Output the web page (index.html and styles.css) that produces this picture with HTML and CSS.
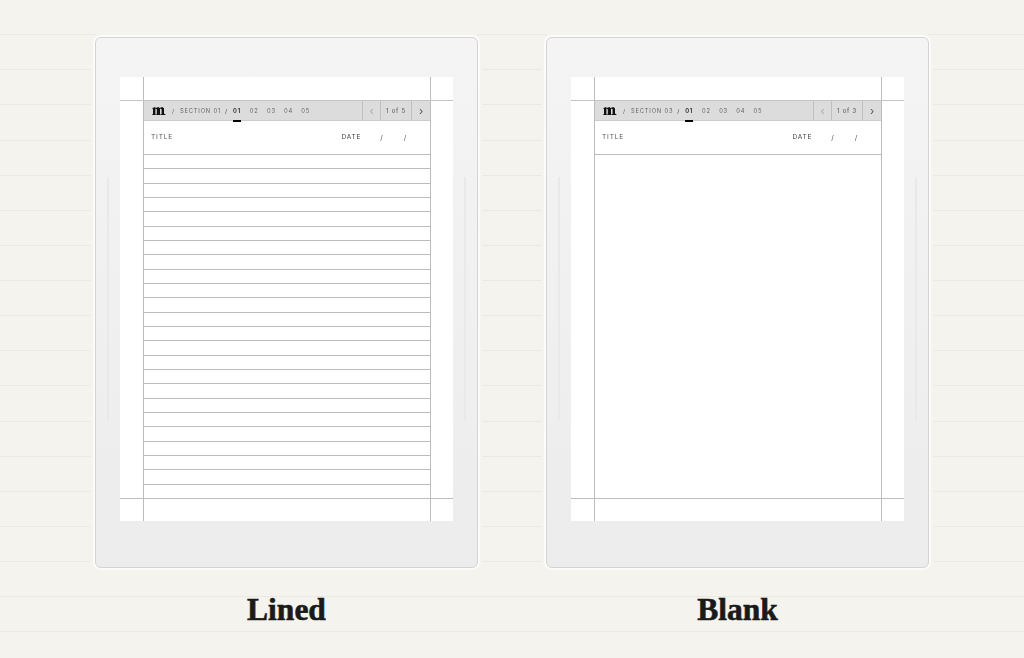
FILE: index.html
```html
<!DOCTYPE html>
<html lang="en">
<head>
    <meta charset="UTF-8">
    <meta name="viewport" content="width=device-width, initial-scale=1.0">
    <title>Templates - Lined and Blank</title>
    <link rel="stylesheet" href="styles.css">
</head>
<body>
    <main class="templates">
        <!-- Lined template -->
        <section class="template">
            <div class="tablet">
                <div class="screen">
                    <div class="margin-top"></div>
                    <div class="page">
                        <div class="toolbar">
                            <svg class="logo" viewBox="0 0 14 8" aria-hidden="true"><path d="M0 1.2 3 0 3.8 1 6.4 0 7.6 1 10.2 0 12 1.2V6.4L14 8H8.6L9.6 6.8V2.2L8 1.6V6.8L8.8 8H4L4.8 6.8V2.2L3.4 1.6V6.8L4 8H0L1 6.8V2Z"/></svg>
                            <span class="crumb">/</span>
                            <span class="crumb section">SECTION 01</span>
                            <span class="crumb slash">/</span>
                            <span class="tab active">01</span>
                            <span class="tab">02</span>
                            <span class="tab">03</span>
                            <span class="tab">04</span>
                            <span class="tab">05</span>
                            <div class="pager">
                                <span class="pager-btn prev">&lsaquo;</span>
                                <span class="pager-count">1 of 5</span>
                                <span class="pager-btn next">&rsaquo;</span>
                            </div>
                        </div>
                        <div class="title-row">
                            <span class="title-label">TITLE</span>
                            <span class="date-label">DATE</span>
                            <span class="date-slash">/</span>
                            <span class="date-slash second">/</span>
                        </div>
                        <div class="lines">
                            <div></div><div></div><div></div><div></div><div></div><div></div>
                            <div></div><div></div><div></div><div></div><div></div><div></div>
                            <div></div><div></div><div></div><div></div><div></div><div></div>
                            <div></div><div></div><div></div><div></div><div></div><div></div>
                        </div>
                    </div>
                    <div class="margin-bottom"></div>
                </div>
            </div>
            <h2 class="caption">Lined</h2>
        </section>

        <!-- Blank template -->
        <section class="template">
            <div class="tablet">
                <div class="screen">
                    <div class="margin-top"></div>
                    <div class="page">
                        <div class="toolbar">
                            <svg class="logo" viewBox="0 0 14 8" aria-hidden="true"><path d="M0 1.2 3 0 3.8 1 6.4 0 7.6 1 10.2 0 12 1.2V6.4L14 8H8.6L9.6 6.8V2.2L8 1.6V6.8L8.8 8H4L4.8 6.8V2.2L3.4 1.6V6.8L4 8H0L1 6.8V2Z"/></svg>
                            <span class="crumb">/</span>
                            <span class="crumb section">SECTION 03</span>
                            <span class="crumb slash">/</span>
                            <span class="tab active">01</span>
                            <span class="tab">02</span>
                            <span class="tab">03</span>
                            <span class="tab">04</span>
                            <span class="tab">05</span>
                            <div class="pager">
                                <span class="pager-btn prev">&lsaquo;</span>
                                <span class="pager-count">1 of 3</span>
                                <span class="pager-btn next">&rsaquo;</span>
                            </div>
                        </div>
                        <div class="title-row">
                            <span class="title-label">TITLE</span>
                            <span class="date-label">DATE</span>
                            <span class="date-slash">/</span>
                            <span class="date-slash second">/</span>
                        </div>
                        <div class="lines"></div>
                    </div>
                    <div class="margin-bottom"></div>
                </div>
            </div>
            <h2 class="caption">Blank</h2>
        </section>
    </main>
</body>
</html>
```
FILE: styles.css
```css
/* Notebook paper background */
html, body {
    height: 100%;
    margin: 0;
}
body {
    font-family: Inter, "Liberation Sans", sans-serif;
    color: #333333;
    background-color: #f5f3ee;
    background-image: repeating-linear-gradient(to bottom, transparent 0, transparent 34.13px, #ebe9e0 34.13px, #ebe9e0 35.13px);
    overflow: hidden;
}
.templates {
    display: flex;
    gap: 68px;
    padding: 37px 0 0 95px;
}
.template {
    width: 383px;
}

/* Tablet frame */
.tablet {
    box-sizing: border-box;
    height: 531px;
    padding: 39px 24px 46px;
    border: 1px solid #d4d4d4;
    border-radius: 6px;
    background: linear-gradient(to bottom, #f4f4f4, #ececec);
    box-shadow: 0 0 0 2px #fbfbfa, 0 0 0 4px #f5f3ee;
    position: relative;
    filter: blur(0.6px);
}
.tablet::before,
.tablet::after {
    content: "";
    position: absolute;
    top: 139px;
    width: 2px;
    height: 244px;
    background-color: #e9e9e9;
}
.tablet::before {
    left: 11px;
}
.tablet::after {
    right: 11px;
}

/* Screen with the margin guides */
.screen {
    display: flex;
    flex-direction: column;
    height: 444px;
    background-color: #ffffff;
    background-image: linear-gradient(#bcbcbc, #bcbcbc), linear-gradient(#bcbcbc, #bcbcbc);
    background-size: 1px 100%;
    background-repeat: no-repeat;
    background-position: 23px 0, 310px 0;
}
.margin-top {
    flex: none;
    height: 23px;
    border-bottom: 1px solid #c4c4c4;
}
.margin-bottom {
    flex: none;
    height: 22px;
    border-top: 1px solid #bcbcbc;
}
.page {
    flex: 1;
    display: flex;
    flex-direction: column;
    min-height: 0;
    margin: 0 23px 0 24px;
}

/* Top toolbar */
.toolbar {
    flex: none;
    display: flex;
    align-items: stretch;
    height: 19px;
    padding-left: 8px;
    background-color: #dcdcdc;
    border-bottom: 1px solid #cccccc;
    font-size: 5.8px;
    letter-spacing: 0.8px;
    color: #666666;
}
.logo {
    flex: none;
    align-self: center;
    width: 14px;
    height: 8px;
    margin-right: 6px;
    fill: #111111;
}
.crumb {
    display: flex;
    align-items: center;
}
.section {
    margin-left: 5px;
}
.slash {
    margin-left: 4px;
    color: #444444;
}
.tab {
    position: relative;
    display: flex;
    align-items: center;
    justify-content: center;
    width: 8px;
    margin-left: 9.2px;
}
.slash + .tab {
    margin-left: 5px;
}
.tab.active {
    font-weight: 600;
    color: #222222;
}
.tab.active::after {
    content: "";
    position: absolute;
    left: 0;
    right: 0;
    bottom: -2px;
    height: 2px;
    background-color: #000000;
}
.pager {
    display: flex;
    margin-left: auto;
}
.pager-btn {
    display: flex;
    align-items: center;
    justify-content: center;
    box-sizing: border-box;
    width: 19px;
    border-left: 1px solid #c0c0c0;
    font-size: 11px;
    letter-spacing: 0;
    color: #555555;
}
.pager-btn.prev {
    width: 18px;
    color: #a8a8a8;
}
.pager-count {
    display: flex;
    align-items: center;
    justify-content: center;
    box-sizing: border-box;
    width: 31px;
    border-left: 1px solid #c0c0c0;
    font-weight: 500;
    letter-spacing: 0.9px;
}

/* Title and date row */
.title-row {
    flex: none;
    display: flex;
    align-items: center;
    height: 34px;
    padding: 0 0 1px 7px;
    box-sizing: border-box;
    border-bottom: 1px solid #bcbcbc;
    font-size: 6.6px;
    letter-spacing: 0.8px;
    color: #555555;
}
.date-label {
    margin-left: auto;
    margin-right: 19px;
    color: #444444;
}
.date-slash {
    margin-right: 20px;
    font-size: 7px;
}
.date-slash.second {
    margin-right: 23px;
}

/* Ruled lines */
.lines {
    flex: 1;
    display: flex;
    flex-direction: column;
    min-height: 0;
}
.lines div {
    flex: 1;
    border-bottom: 1px solid #bcbcbc;
}
.lines div:last-child {
    border-bottom: none;
}

/* Captions under the tablets */
.caption {
    margin: 25px 0 0;
    text-align: center;
    font-family: "Liberation Serif", serif;
    font-size: 31.5px;
    line-height: 34px;
    font-weight: 700;
    color: #1a1a1a;
    -webkit-text-stroke: 0.6px #1a1a1a;
}
```
